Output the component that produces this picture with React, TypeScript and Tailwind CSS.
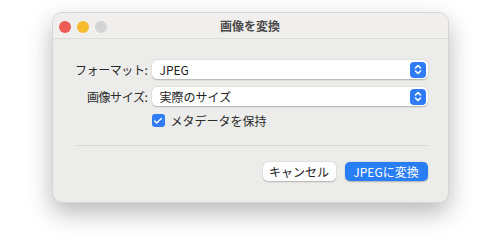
import { Check } from 'lucide-react';

const jp = { fontFamily: '"Noto Sans CJK JP", "Noto Sans", sans-serif' };

const Stepper = () => (
  <span className="flex h-[16px] w-[16px] items-center justify-center rounded-[4px] bg-[#2f7cf6]">
    <svg width="8" height="11" viewBox="0 0 8 11" fill="none" stroke="white" strokeWidth="1.6" strokeLinecap="round" strokeLinejoin="round">
      <path d="M1.5 4L4 1.5L6.5 4" />
      <path d="M1.5 7L4 9.5L6.5 7" />
    </svg>
  </span>
);

const Popup = ({ value }: { value: string }) => (
  <div className="flex h-[19px] items-center justify-between rounded-[5px] bg-white pl-[8px] pr-[2px] text-[12px] text-[#222] shadow-[0_0.5px_1.5px_rgba(0,0,0,0.25)]">
    <span className="leading-none">{value}</span>
    <Stepper />
  </div>
);

const App = () => {
  return (
    <div className="flex h-[250px] w-[500px] justify-center bg-white pt-[12px]" style={jp}>
      <div className="flex h-[191px] w-[397px] flex-col overflow-hidden rounded-[10px] border border-[#d6d6d6] bg-[#ececea] shadow-[0_10px_24px_rgba(0,0,0,0.28)]">
        {/* Title bar */}
        <div className="relative flex h-[26px] shrink-0 items-center justify-center border-b border-[#dcdcdc] bg-[#f0efee]">
          <div className="absolute left-[6px] top-[8px] flex gap-[6px]">
            <span className="h-[12px] w-[12px] rounded-full bg-[#ee5a54]" />
            <span className="h-[12px] w-[12px] rounded-full bg-[#f7bb2e]" />
            <span className="h-[12px] w-[12px] rounded-full bg-[#d4d4d4]" />
          </div>
          <span className="text-[12px] font-bold text-[#4b4b4b]">画像を変換</span>
        </div>

        {/* Form */}
        <div className="flex flex-1 flex-col pl-[22px] pr-[20px] pt-[21px]">
          <div className="grid grid-cols-[73px_1fr] items-center gap-x-[4px] gap-y-[8px] text-[12px] leading-[19px] text-[#2a2a2a]">
            <span className="justify-self-end whitespace-nowrap tracking-[-0.4px]">フォーマット:</span>
            <Popup value="JPEG" />
            <span className="justify-self-end whitespace-nowrap tracking-[-0.4px]">画像サイズ:</span>
            <Popup value="実際のサイズ" />
            <span />
            <div className="-mt-[3px] flex items-center gap-[6px]">
              <span className="flex h-[13px] w-[13px] items-center justify-center rounded-[3px] bg-[#2f7cf6]">
                <Check size={10} strokeWidth={3.2} color="white" />
              </span>
              <span>メタデータを保持</span>
            </div>
          </div>

          <div className="mt-[15px] h-px bg-[#d9d9d7]" />

          <div className="mt-[16px] flex justify-end gap-[9px] text-[12px]">
            <button className="flex h-[19px] w-[73px] items-center justify-center rounded-[5px] bg-white text-[#222] shadow-[0_0.5px_1.5px_rgba(0,0,0,0.25)]">
              キャンセル
            </button>
            <button className="flex h-[19px] w-[83px] items-center justify-center rounded-[5px] bg-[#2a7ef5] text-white shadow-[0_0.5px_1.5px_rgba(0,0,0,0.25)]">
              JPEGに変換
            </button>
          </div>
        </div>
      </div>
    </div>
  );
};

export default App;
